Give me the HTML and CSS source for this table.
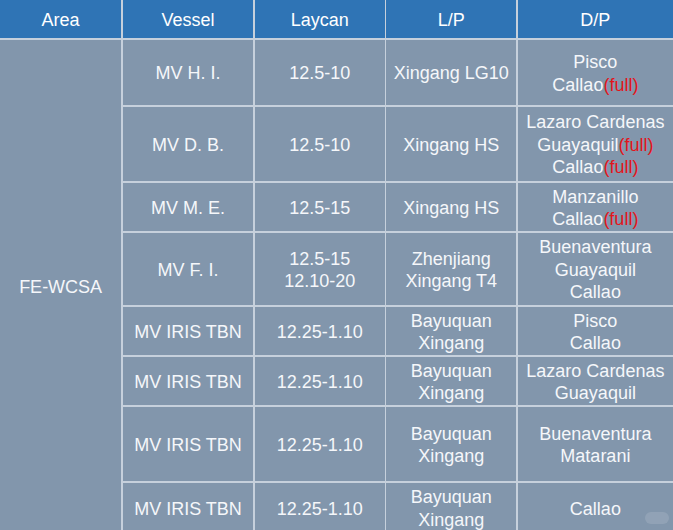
FILE: index.html
```html
<!DOCTYPE html>
<html>
<head>
<meta charset="utf-8">
<link rel="stylesheet" href="styles.css">
</head>
<body>
<div class="sheet">
  <div class="hd"><div class="txt">Area</div></div>
  <div class="hd"><div class="txt">Vessel</div></div>
  <div class="hd"><div class="txt">Laycan</div></div>
  <div class="hd"><div class="txt">L/P</div></div>
  <div class="hd"><div class="txt">D/P</div></div>

  <div class="cell area"><div class="txt">FE-WCSA</div></div>

  <div class="cell"><div class="txt">MV H. I.</div></div>
  <div class="cell"><div class="txt">12.5-10</div></div>
  <div class="cell"><div class="txt">Xingang LG10</div></div>
  <div class="cell"><div class="txt">Pisco<br>Callao<span class="full">(full)</span></div></div>

  <div class="cell"><div class="txt">MV D. B.</div></div>
  <div class="cell"><div class="txt">12.5-10</div></div>
  <div class="cell"><div class="txt">Xingang HS</div></div>
  <div class="cell"><div class="txt">Lazaro Cardenas<br>Guayaquil<span class="full">(full)</span><br>Callao<span class="full">(full)</span></div></div>

  <div class="cell"><div class="txt">MV M. E.</div></div>
  <div class="cell"><div class="txt">12.5-15</div></div>
  <div class="cell"><div class="txt">Xingang HS</div></div>
  <div class="cell"><div class="txt">Manzanillo<br>Callao<span class="full">(full)</span></div></div>

  <div class="cell"><div class="txt">MV F. I.</div></div>
  <div class="cell"><div class="txt">12.5-15<br>12.10-20</div></div>
  <div class="cell"><div class="txt">Zhenjiang<br>Xingang T4</div></div>
  <div class="cell"><div class="txt">Buenaventura<br>Guayaquil<br>Callao</div></div>

  <div class="cell"><div class="txt">MV IRIS TBN</div></div>
  <div class="cell"><div class="txt">12.25-1.10</div></div>
  <div class="cell"><div class="txt">Bayuquan<br>Xingang</div></div>
  <div class="cell"><div class="txt">Pisco<br>Callao</div></div>

  <div class="cell"><div class="txt">MV IRIS TBN</div></div>
  <div class="cell"><div class="txt">12.25-1.10</div></div>
  <div class="cell"><div class="txt">Bayuquan<br>Xingang</div></div>
  <div class="cell"><div class="txt">Lazaro Cardenas<br>Guayaquil</div></div>

  <div class="cell"><div class="txt">MV IRIS TBN</div></div>
  <div class="cell"><div class="txt">12.25-1.10</div></div>
  <div class="cell"><div class="txt">Bayuquan<br>Xingang</div></div>
  <div class="cell"><div class="txt">Buenaventura<br>Matarani</div></div>

  <div class="cell"><div class="txt">MV IRIS TBN</div></div>
  <div class="cell"><div class="txt">12.25-1.10</div></div>
  <div class="cell"><div class="txt">Bayuquan<br>Xingang</div></div>
  <div class="cell"><div class="txt">Callao</div></div>
</div>
<div class="mark"></div>
</body>
</html>
```

FILE: styles.css
```css
html, body {
  margin: 0;
  padding: 0;
  background: #8398ae;
  overflow: hidden;
}

.sheet {
  display: grid;
  grid-template-columns: 121.25px 130.5px 130px 130px 155.25px;
  grid-template-rows: 38.25px 65.5px 74.5px 48.5px 72.5px 48.5px 48.5px 74.5px 50px;
  gap: 1.5px;
  background: #c6d0dc;
  width: 673px;
  font-family: "Liberation Sans", Arial, sans-serif;
  font-size: 18px;
  line-height: 22.5px;
}

.hd {
  background: #2f74b5;
  color: #ffffff;
  display: flex;
  align-items: center;
  justify-content: center;
  padding-top: 2px;
}

.cell {
  background: #8296ac;
  color: #f5f7fa;
  display: flex;
  align-items: center;
  justify-content: center;
  padding-top: 2px;
}

.txt {
  text-align: center;
  white-space: nowrap;
}

.area {
  grid-column: 1;
  grid-row: 2 / span 8;
}

.full {
  color: #e3151b;
}

.mark {
  position: absolute;
  left: 645px;
  top: 512px;
  width: 24px;
  height: 12px;
  border-radius: 6px;
  background: rgba(255, 255, 255, 0.12);
}
```
